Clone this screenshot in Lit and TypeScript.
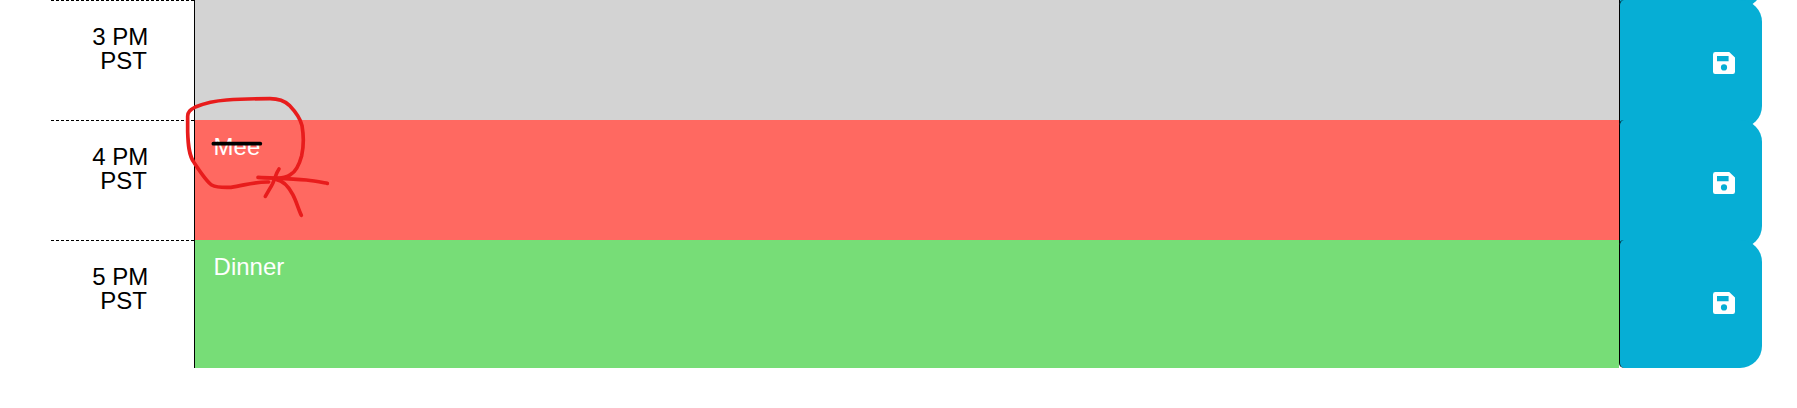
import { LitElement, html, css } from "lit";
import { customElement, property } from "lit/decorators.js";
import { classMap } from "lit/directives/class-map.js";

type Phase = "past" | "present" | "future";

interface Slot {
  hour: string;
  phase: Phase;
  text: string;
}

const SLOTS: Slot[] = [
  { hour: "3 PM", phase: "past", text: "" },
  { hour: "4 PM", phase: "present", text: "Mee" },
  { hour: "5 PM", phase: "future", text: "Dinner" },
];

@customElement("time-block")
class TimeBlock extends LitElement {
  @property({ attribute: false }) slotData!: Slot;

  static styles = css`
    :host {
      display: block;
      height: 120px;
    }
    .row {
      display: grid;
      grid-template-columns: minmax(0, 1fr) minmax(0, 10fr) minmax(0, 1fr);
      align-items: start;
    }
    .hour {
      box-sizing: border-box;
      border-top: 1px dashed #000;
      padding: 24px 4px 0 0;
      text-align: center;
      font-size: 24px;
      line-height: 24px;
      color: #000;
    }
    .line {
      display: block;
      white-space: pre;
    }
    .entry {
      box-sizing: border-box;
      display: block;
      width: 100%;
      height: 128px;
      margin: 0;
      padding: 13px 19px;
      border: 0;
      border-left: 1px solid #000;
      border-radius: 0;
      outline: none;
      resize: none;
      overflow: hidden;
      font: 24px/28px "Liberation Sans", Arial, sans-serif;
      color: #fff;
    }
    .past {
      background: #d3d3d3;
    }
    .present {
      background: #ff6961;
    }
    .future {
      background: #77dd77;
    }
    .save {
      box-sizing: border-box;
      display: flex;
      align-items: center;
      justify-content: flex-end;
      width: 100%;
      height: 128px;
      margin: 0;
      padding: 0 27px 2px 0;
      border: 0;
      border-left: 1px solid #000;
      border-radius: 5px 22px 22px 5px;
      background: #06aed5;
      color: #fff;
      cursor: pointer;
    }
    .icon {
      display: block;
      width: 22px;
      height: 22px;
    }
  `;

  render() {
    const { hour, phase, text } = this.slotData;
    return html`
      <div class="row">
        <label class="hour" for="entry"
          ><span class="line">${hour}</span
          ><span class="line">${"\u00a0PST"}</span></label
        >
        <textarea
          id="entry"
          class=${classMap({
            entry: true,
            past: phase === "past",
            present: phase === "present",
            future: phase === "future",
          })}
          spellcheck="false"
          .value=${text}
        ></textarea>
        <button class="save" type="button" aria-label="Save">
          <svg class="icon" viewBox="0 0 22 22" aria-hidden="true">
            <path
              fill="currentColor"
              fill-rule="evenodd"
              d="M2.4 0H16.2L22 5.6V19.8A2.2 2.2 0 0 1 19.8 22H2.2A2.2 2.2 0 0 1 0 19.8V2.4A2.4 2.4 0 0 1 2.4 0ZM4 4V9.2H15.6V4ZM11 12.3A3.1 3.1 0 1 0 11 18.5A3.1 3.1 0 1 0 11 12.3Z"
            />
          </svg>
        </button>
      </div>
    `;
  }
}

@customElement("app-root")
class AppRoot extends LitElement {
  static styles = css`
    :host {
      display: block;
      min-height: 100vh;
      overflow: hidden;
      background: #fff;
      font-family: "Liberation Sans", Arial, sans-serif;
    }
    .planner {
      position: relative;
      margin: 0 35px 40px 51px;
    }
    /* Lower edge of the save button scrolled off above the first block. */
    .planner::before {
      content: "";
      position: absolute;
      box-sizing: border-box;
      top: -120px;
      right: 0;
      width: calc(100% / 12);
      height: 128px;
      border-left: 1px solid #000;
      border-radius: 5px 22px 22px 5px;
      background: #06aed5;
    }
    .block {
      position: relative;
    }
    .markup {
      position: absolute;
      left: 119px;
      top: 85px;
      width: 180px;
      height: 140px;
      pointer-events: none;
    }
    .pen {
      fill: none;
      stroke: #e81c1c;
      stroke-width: 11;
      stroke-linecap: round;
      stroke-linejoin: round;
    }
    .strike {
      stroke: #000;
    }
  `;

  render() {
    return html`
      <main class="planner">
        ${SLOTS.map(
          (s) => html`<time-block class="block" .slotData=${s}></time-block>`
        )}
        <svg class="markup" viewBox="0 0 540 420" aria-hidden="true">
          <path class="pen strike" d="M130 176H271" />
          <path
            class="pen"
            d="M296 291C251 290 225 301 183 307C157 308 140 308 125 300C109 289 88 257 73 234C56 212 54 174 53 140V94C53 80 61 74 76 66C108 53 140 47 170 45C209 42 255 41 300 41C322 41 342 46 358 61C378 82 391 101 396 122C401 151 401 185 395 212C388 238 379 259 361 269C350 277 336 279 316 281"
          />
          <path class="pen" d="M264 277C320 280 363 281 409 285C433 287 451 291 472 295" />
          <path class="pen" d="M327 252C315 268 314 289 303 305L286 334" />
          <path class="pen" d="M318 283C341 287 357 307 368 328C379 348 385 372 394 391" />
        </svg>
      </main>
    `;
  }
}
